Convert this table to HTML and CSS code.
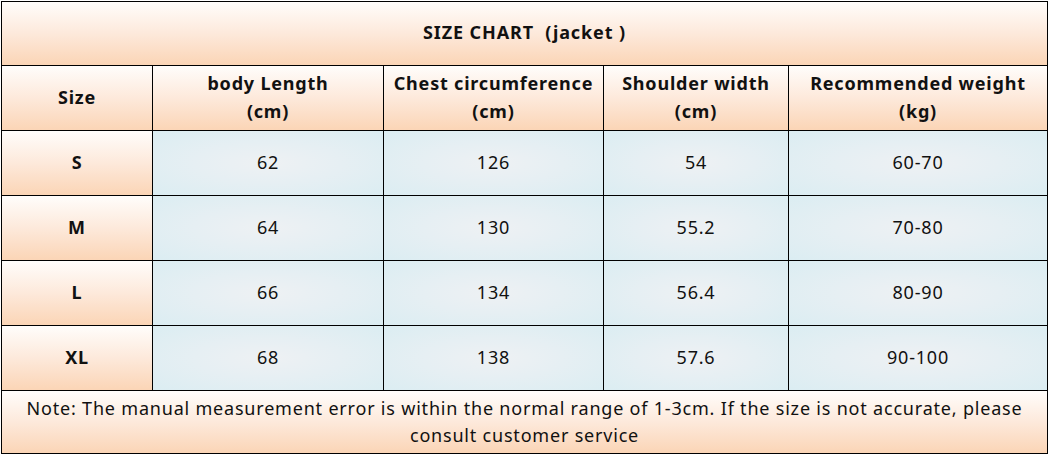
FILE: index.html
```html
<!DOCTYPE html>
<html>
<head>
<meta charset="utf-8">
<link rel="stylesheet" href="styles.css">
</head>
<body>
<div class="chart">
  <div class="cell title peach">SIZE CHART&nbsp; (jacket )</div>

  <div class="cell head peach">Size</div>
  <div class="cell head peach">body Length<br>(cm)</div>
  <div class="cell head peach">Chest circumference<br>(cm)</div>
  <div class="cell head peach">Shoulder width<br>(cm)</div>
  <div class="cell head peach">Recommended weight<br>(kg)</div>

  <div class="cell size peach">S</div>
  <div class="cell val">62</div>
  <div class="cell val">126</div>
  <div class="cell val">54</div>
  <div class="cell val">60-70</div>

  <div class="cell size peach">M</div>
  <div class="cell val">64</div>
  <div class="cell val">130</div>
  <div class="cell val">55.2</div>
  <div class="cell val">70-80</div>

  <div class="cell size peach">L</div>
  <div class="cell val">66</div>
  <div class="cell val">134</div>
  <div class="cell val">56.4</div>
  <div class="cell val">80-90</div>

  <div class="cell size peach">XL</div>
  <div class="cell val">68</div>
  <div class="cell val">138</div>
  <div class="cell val">57.6</div>
  <div class="cell val">90-100</div>

  <div class="cell note peach">Note: The manual measurement error is within the normal range of 1-3cm. If the size is not accurate, please consult customer service</div>
</div>
</body>
</html>
```

FILE: styles.css
```css
html, body {
  margin: 0;
  padding: 0;
  background: #ffffff;
}

.chart {
  margin: 1px 0 0 1px;
  width: 1047px;
  box-sizing: border-box;
  display: grid;
  grid-template-columns: 150px 230px 219px 184px 258px;
  grid-template-rows: 63px 64px 64px 64px 64px 64px 62px;
  gap: 1px;
  padding: 1px;
  background: #000000;
  font-family: "Noto Sans", "Open Sans", sans-serif;
  color: #111111;
}

.cell {
  display: flex;
  align-items: center;
  justify-content: center;
  text-align: center;
  box-sizing: border-box;
}

.peach {
  background: linear-gradient(to bottom, #fffdfb 0%, #fde9db 50%, #fbd5b6 100%);
}

.val {
  background: radial-gradient(ellipse at center, #eef1f3 0%, #e6eff3 45%, #dbedf2 100%);
  font-size: 18px;
  letter-spacing: 0.8px;
  padding-bottom: 2px;
}

.title {
  grid-column: 1 / span 5;
  font-weight: 700;
  font-size: 18px;
  letter-spacing: 0.9px;
  padding-bottom: 4px;
}

.head {
  font-weight: 700;
  font-size: 18px;
  line-height: 28px;
  letter-spacing: 0.8px;
  padding-bottom: 3px;
}

.size {
  font-weight: 700;
  font-size: 18px;
  letter-spacing: 0.8px;
  padding-bottom: 2px;
}

.note {
  grid-column: 1 / span 5;
  font-size: 18px;
  line-height: 27px;
  letter-spacing: 0.8px;
  padding: 0 20px;
}
```
